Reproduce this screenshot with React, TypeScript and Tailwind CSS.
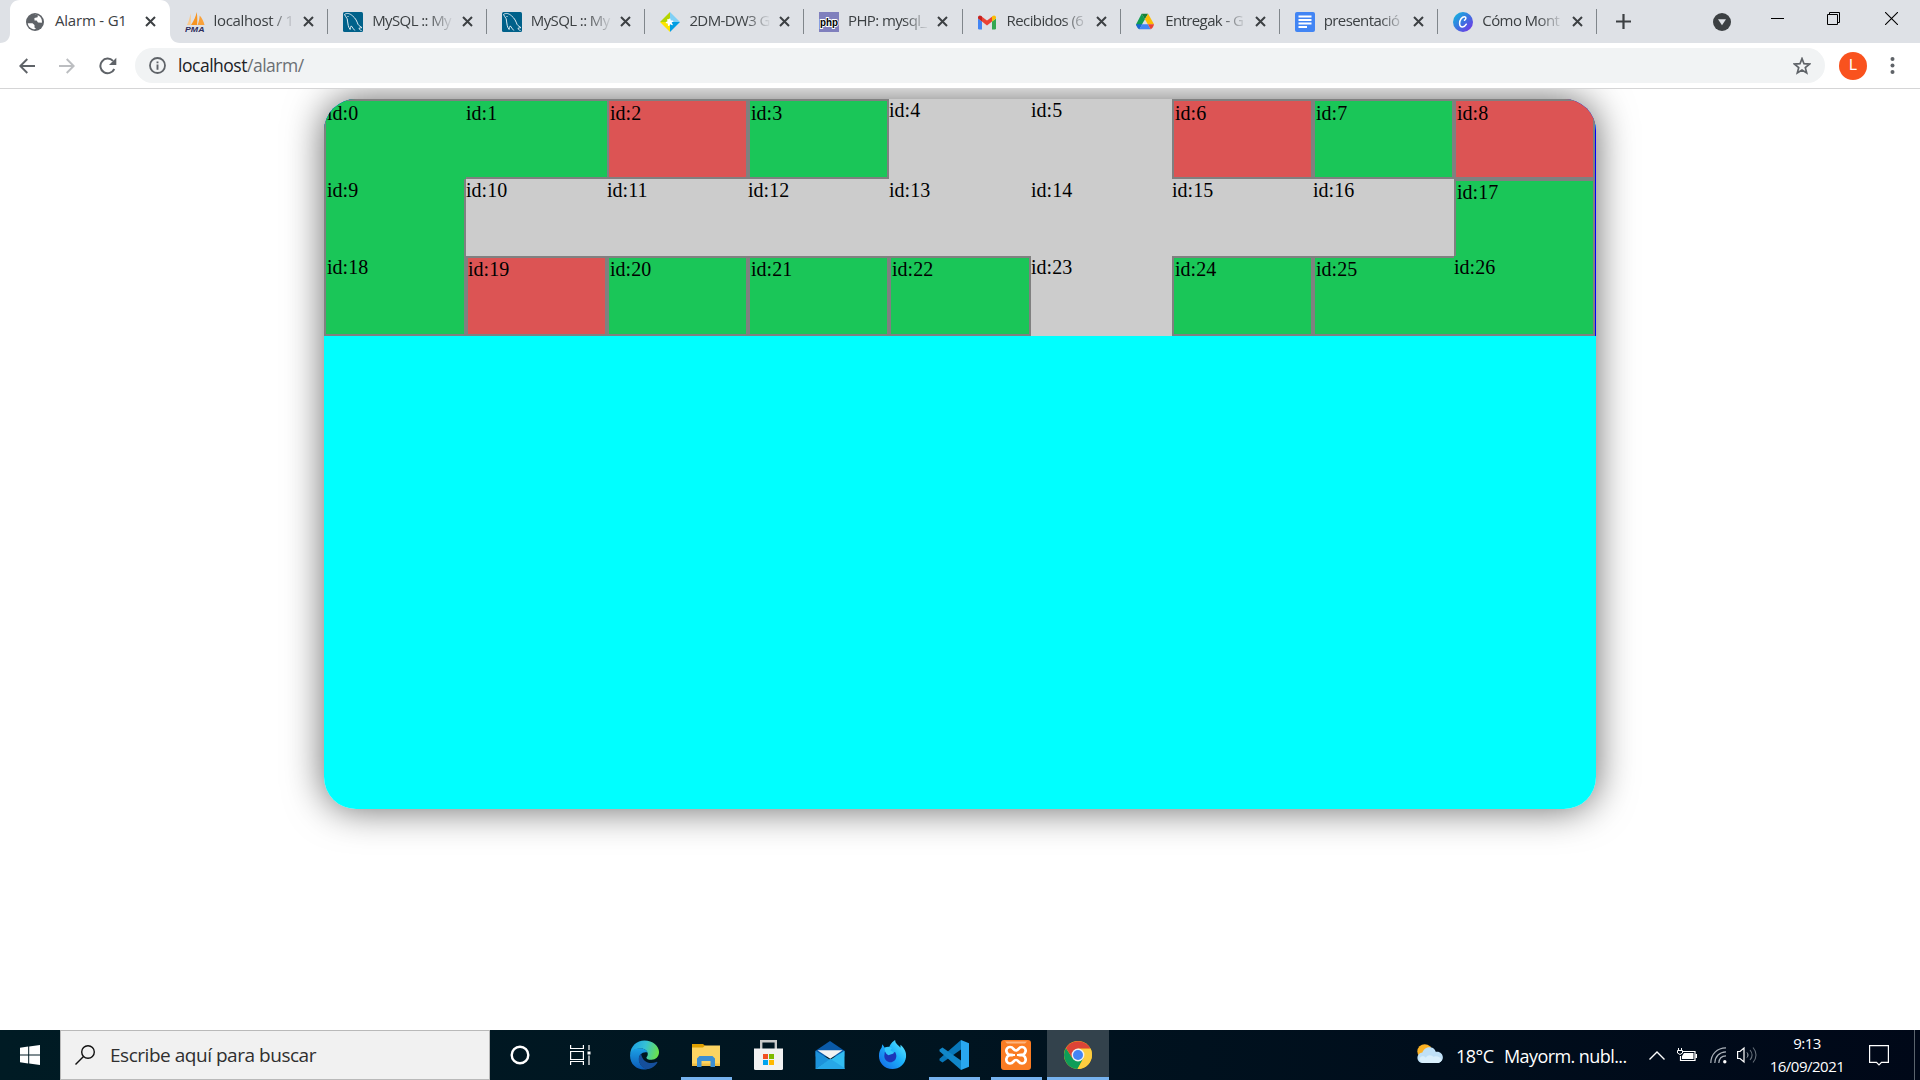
import React from "react";

type Kind = "green" | "red" | "floor";
type Cell = { kind: Kind; edges: string };

const ALL = "border-2 pl-px";
const OPEN = "border-0";

const cells: Cell[] = [
  { kind: "green", edges: "border-t-2 border-l-2 pt-px pl-px" },
  { kind: "green", edges: "border-t-2 border-b-2 pt-px" },
  { kind: "red", edges: "border-2 pt-px pl-px" },
  { kind: "green", edges: "border-2 pt-px pl-px" },
  { kind: "floor", edges: OPEN },
  { kind: "floor", edges: OPEN },
  { kind: "red", edges: "border-2 pt-px pl-px" },
  { kind: "green", edges: "border-2 pt-px pl-px" },
  { kind: "red", edges: "border-2 pt-px pl-px" },
  { kind: "green", edges: "border-l-2 border-r-2 pl-px" },
  { kind: "floor", edges: OPEN },
  { kind: "floor", edges: OPEN },
  { kind: "floor", edges: OPEN },
  { kind: "floor", edges: OPEN },
  { kind: "floor", edges: OPEN },
  { kind: "floor", edges: OPEN },
  { kind: "floor", edges: OPEN },
  { kind: "green", edges: "border-t-2 border-l-2 border-r-2 pl-px" },
  { kind: "green", edges: "border-l-2 border-r-2 border-b-2 pl-px" },
  { kind: "red", edges: "border-2" },
  { kind: "green", edges: ALL },
  { kind: "green", edges: ALL },
  { kind: "green", edges: ALL },
  { kind: "floor", edges: OPEN },
  { kind: "green", edges: ALL },
  { kind: "green", edges: "border-t-2 border-l-2 border-b-2 pl-px" },
  { kind: "green", edges: "border-r-2 border-b-2" },
];

const fills: Record<Kind, string> = {
  green: "bg-[#1ac658]",
  red: "bg-[#dc5454]",
  floor: "bg-[#cccccc]",
};

function GlobeIcon() {
  return (
    <svg className="size-5" viewBox="0 0 20 20">
      <circle cx="9" cy="10" r="9" fill="#5f6368" />
      <path d="M1.8 11.2h4.700l2 1.900v2.300l1.600 1.700c-4.200.7-7.900-2-8.300-5.900z" fill="#fff" />
      <path d="M8.300 3 11.900 3.100 11.600 5.300 8.400 6.100 8.500 8.400 10.600 8.500 12 10.600 15.900 10.700C16.600 6.500 13.700 3 9.500 2.700z" fill="#fff" />
    </svg>
  );
}

function PmaIcon() {
  return (
    <svg className="size-5" viewBox="0 0 20 20">
      <path d="M2 13C4 9 5 5 5.400 1.500 6 5 6 9 5.500 13z" fill="#fbc98a" />
      <path d="M6 13C9 9 11 4 11.600 0 12.600 5 12.400 9 12 13z" fill="#f79420" />
      <path d="M12.500 13C14 10 14.500 6 14.700 3.500 17 6 18.800 10 19.500 13z" fill="#f9a13a" />
      <text x="0" y="19.600" fontSize="7.500" fontWeight="bold" fontStyle="italic" fontFamily="Liberation Sans, sans-serif" fill="#2c2c5c" textLength="19.500" lengthAdjust="spacingAndGlyphs">PMA</text>
    </svg>
  );
}

function MySqlIcon() {
  return (
    <svg className="size-5" viewBox="0 0 20 20">
      <rect width="20" height="20" rx="1.500" fill="#00618a" />
      <path d="M1.500 2.500C4 .6 7 1.500 9.500 3.800c3.500 2.900 4.300 5.500 5.500 8.500 1 1.700 2.700 2.200 4 3.400-1.400 0-2.500.2-3.200.8 1 .8 2 1.500 2.700 2.500M1.500 2.500c.6 1.600 1.900 2.700 2.700 4.300.6 2 .3 4.300 1 6.500.3 1.700 1 3 1.900 4.200.2-1.500.4-2.800 1.200-3.600 1.200 1.500 2.100 3.200 3.500 4.600" fill="none" stroke="#dcebf2" strokeWidth="1" />
      <circle cx="5" cy="4.500" r=".6" fill="#fff" />
    </svg>
  );
}

function PuzzleIcon() {
  return (
    <svg className="size-5" viewBox="0 0 20 20">
      <path d="M0 10 10 0v10z" fill="#b5d400" />
      <path d="M10 0v10h10z" fill="#7fd0f5" />
      <path d="M0 10h10v10z" fill="#fce500" />
      <path d="M10 10h10L10 20z" fill="#009ee3" />
      <path d="M7.200 7.200c1.600.7 1.600-1.400 3-.6.9.7-.2 1.500.7 1.900.6.200 2.200-.6 2.500.6.300 1.300-1.700.9-1.700 1.700 0 .9 1.600 1.300.9 2.200-.9.8-1.600-.9-2.500-.6-.8.3-.3 1.800-1.600 1.600-1.300-.3-.2-1.900-.8-2.400-.5-.4-1.900.1-2-1.100.1-1 1.600-.5 1.800-1.200.1-.7-.8-1.400-.3-2.100z" fill="#fff" />
    </svg>
  );
}

function PhpIcon() {
  return (
    <svg className="size-5" viewBox="0 0 20 20">
      <rect width="20" height="20" fill="#7f7fbd" />
      <text x="1" y="14" fontSize="11" fontWeight="bold" fontFamily="Liberation Sans, sans-serif" fill="#000" stroke="#fff" strokeWidth="1.800" paintOrder="stroke" textLength="18" lengthAdjust="spacingAndGlyphs">php</text>
    </svg>
  );
}

function GmailIcon() {
  return (
    <svg className="size-5" viewBox="0 0 20 20">
      <path d="M0 6.500 4 9.500V17.500H1.300A1.300 1.300 0 0 1 0 16.200z" fill="#4285f4" />
      <path d="M14 9.500 18 6.500V16.200a1.300 1.300 0 0 1-1.300 1.300H14z" fill="#34a853" />
      <path d="M4 4.800 9 8.600 14 4.800V9.600L9 13.400 4 9.600z" fill="#ea4335" />
      <path d="M0 5.500C0 3.600 2 2.800 3.400 4L4 4.500V9.600L0 6.600z" fill="#c5221f" />
      <path d="M18 5.500C18 3.600 16 2.800 14.600 4L14 4.500V9.600L18 6.600z" fill="#fbbc04" />
    </svg>
  );
}

function DriveIcon() {
  return (
    <svg className="size-5" viewBox="0 0 20 20">
      <path d="M5.600 1.700 8.900 7.300 3.200 17.200 0 12.500z" fill="#0f9d50" />
      <path d="M5.600 1.700H12.100L8.900 7.300z" fill="#188038" />
      <path d="M12.100 1.700 18 12.200H11.800L8.900 7.300z" fill="#fbbc04" />
      <path d="M0 12.200H6.100L3.300 17.200C2 16.900 0 13.500 0 12.200z" fill="#1967d2" />
      <path d="M6.100 12.200H11.900L14.700 17.200H3.300z" fill="#4285f4" />
      <path d="M11.900 12.200H18C18 13.500 16 16.900 14.700 17.200z" fill="#ea4335" />
    </svg>
  );
}

function DocsIcon() {
  return (
    <svg className="size-5" viewBox="0 0 20 20">
      <rect width="20" height="20" rx="2" fill="#4285f4" />
      <path d="M3.500 4.500H16.500M3.500 8H16.500M3.500 11.500H16.500M3.500 15H12" stroke="#fff" strokeWidth="1.800" />
    </svg>
  );
}

function CanvaIcon() {
  return (
    <svg className="size-5" viewBox="0 0 20 20">
      <defs>
        <linearGradient id="canva" x1="0" y1="0" x2="1" y2="1">
          <stop offset="0" stopColor="#0cc0df" />
          <stop offset=".5" stopColor="#3b74e0" />
          <stop offset="1" stopColor="#7d2ae8" />
        </linearGradient>
      </defs>
      <circle cx="10" cy="10" r="10" fill="url(#canva)" />
      <path d="M11.500 8.200c1.700-.6 2-3.300.1-3.500-2.700-.1-5 3.400-5 6.600 0 2.200 1.100 3.700 2.900 3.700 1.600 0 2.900-1.200 3.800-2.800" fill="none" stroke="#fff" strokeWidth="1.500" strokeLinecap="round" />
    </svg>
  );
}

const FADE = "tracking-[-0.35px] [mask-image:linear-gradient(to_right,#000_68%,transparent_100%)]";
const FADE_TIGHT = "tracking-[-0.6px] [mask-image:linear-gradient(to_right,#000_68%,transparent_100%)]";

const tabs = [
  { title: "Alarm - G1", icon: <GlobeIcon />, look: "tracking-[-0.2px]" },
  { title: "localhost / 1", icon: <PmaIcon />, look: FADE },
  { title: "MySQL :: My", icon: <MySqlIcon />, look: FADE_TIGHT },
  { title: "MySQL :: My", icon: <MySqlIcon />, look: FADE_TIGHT },
  { title: "2DM-DW3 G", icon: <PuzzleIcon />, look: FADE_TIGHT },
  { title: "PHP: mysql_", icon: <PhpIcon />, look: FADE_TIGHT },
  { title: "Recibidos (6", icon: <GmailIcon />, look: FADE_TIGHT },
  { title: "Entregak - G", icon: <DriveIcon />, look: FADE_TIGHT },
  { title: "presentació", icon: <DocsIcon />, look: FADE_TIGHT },
  { title: "Cómo Mont", icon: <CanvaIcon />, look: FADE_TIGHT },
];

function TabItem({ title, icon, look, active, divider }: { title: string; icon: React.ReactNode; look: string; active: boolean; divider: boolean }) {
  return (
    <div className={`relative flex h-[43px] w-[158.6px] shrink-0 items-center pl-4 ${active ? "z-10" : ""}`}>
      {active && (
        <svg className="absolute top-0 -left-[10px] h-[43px] w-[180px]" viewBox="0 0 180 43">
          <path d="M0 43C6 43 10 39 10 33V10C10 4 14 0 20 0H160C166 0 170 4 170 10V33C170 39 174 43 180 43z" fill="#fff" />
        </svg>
      )}
      <div className="relative size-5 shrink-0">{icon}</div>
      <div className={`relative mb-[3px] ml-[9px] w-[82px] text-[15px] leading-5 whitespace-nowrap text-[#3c4043] ${look}`}>
        {title}
      </div>
      <svg className="relative ml-[7.5px] size-[11px] shrink-0" viewBox="0 0 11 11">
        <path d="M1 1 10 10M10 1 1 10" stroke="#3c4043" strokeWidth="2" />
      </svg>
      {divider && <div className="-mr-px ml-auto h-[25px] w-px bg-[#80868b]" />}
    </div>
  );
}

function TabStrip() {
  return (
    <div className="flex h-[43px] bg-[#dee1e6] pl-[10px]">
      {tabs.map((t, i) => (
        <TabItem key={i} title={t.title} icon={t.icon} look={t.look} active={i === 0} divider={i > 0} />
      ))}
      <div className="flex flex-1 items-center pl-5">
        <svg className="size-[15px]" viewBox="0 0 15 15">
          <path d="M7.500 0V15M0 7.500H15" stroke="#3c4043" strokeWidth="2.200" />
        </svg>
        <svg className="ml-[82px] size-[18px]" viewBox="0 0 18 18">
          <circle cx="9" cy="9" r="9" fill="#3c4043" />
          <path d="M5 6.300H13L9 12.300z" fill="#dee1e6" />
        </svg>
        <div className="ml-auto flex h-full items-start pt-3">
          <svg className="mr-[43px] h-[13px] w-[13px]" viewBox="0 0 13 13">
            <path d="M0 6.500H13" stroke="#000" />
          </svg>
          <svg className="mr-[44px] h-[13px] w-[14px]" viewBox="0 0 14 13">
            <path d="M.5 2.500H10.500V12.500H.5zM2.500 2.500V.5H12.500V10.500H10.500" fill="none" stroke="#000" />
          </svg>
          <svg className="mr-[22px] h-[13px] w-[13px]" viewBox="0 0 13 13">
            <path d="M0 0 13 13M13 0 0 13" stroke="#000" strokeWidth="1.100" />
          </svg>
        </div>
      </div>
    </div>
  );
}

function Toolbar() {
  return (
    <div className="flex h-[46px] items-center border-b border-[#d5d5d6] bg-white pl-[19px]">
      <svg className="h-4 w-4" viewBox="0 0 16 16" fill="none" stroke="#5f6368" strokeWidth="1.900">
        <path d="M16 8H1.500M8.300 1 1.300 8 8.300 15" />
      </svg>
      <svg className="ml-6 h-4 w-4" viewBox="0 0 16 16" fill="none" stroke="#bcbec1" strokeWidth="1.900">
        <path d="M0 8H14.500M7.700 1 14.700 8 7.700 15" />
      </svg>
      <svg className="ml-6 h-[18px] w-[18px]" viewBox="0 0 18 18">
        <path d="M15.300 12A7.300 7.300 0 1 1 14 3.900" fill="none" stroke="#5f6368" strokeWidth="2" />
        <path d="M17.300.7V8H10z" fill="#5f6368" />
      </svg>
      <div className="ml-[18px] flex h-[35px] w-[1690px] items-center rounded-full bg-[#f1f3f4] pr-[14px] pl-[14px]">
        <svg className="size-[17px]" viewBox="0 0 17 17">
          <circle cx="8.500" cy="8.500" r="7.500" fill="none" stroke="#5f6368" strokeWidth="1.800" />
          <path d="M8.500 7.500V12.800M8.500 4.400V6.200" stroke="#5f6368" strokeWidth="1.900" />
        </svg>
        <div className="mb-px ml-[12px] text-[17.5px] leading-6 tracking-[-0.48px] text-[#202124]">
          localhost<span className="text-[#6b6f73]">/alarm/</span>
        </div>
        <svg className="ml-auto size-[18px]" viewBox="0 0 18 18">
          <path d="M9 1.600 11 6.700 16.500 7.100 12.300 10.600 13.700 16 9 13.100 4.300 16 5.700 10.600 1.500 7.100 7 6.700z" fill="none" stroke="#5f6368" strokeWidth="1.700" />
        </svg>
      </div>
      <div className="ml-[14px] flex size-7 items-center justify-center rounded-full bg-[#f9521e] font-['Roboto',sans-serif] text-[15px] text-white">L</div>
      <svg className="ml-[23px] h-[17px] w-[5px]" viewBox="0 0 5 17" fill="#5f6368">
        <circle cx="2.500" cy="2" r="2" />
        <circle cx="2.500" cy="8.500" r="2" />
        <circle cx="2.500" cy="15" r="2" />
      </svg>
    </div>
  );
}

function AlarmMap() {
  return (
    <main className="flex h-[941px] justify-center overflow-hidden bg-white pt-[10px]">
      <div className="h-[710px] w-[1272px] rounded-[32px] shadow-[0_0_38px_rgba(0,0,0,0.6)]">
        <div className="h-full overflow-hidden rounded-[32px] bg-[#00ffff]">
          <div className="bg-[#0000ff]">
            <div className="grid w-[1271px] grid-cols-[142px_141px_141px_141px_142px_141px_141px_141px_141px] grid-rows-[80px_77px_80px] font-['Liberation_Serif',serif] text-[20px] leading-[23px] text-black">
              {cells.map((c, i) => (
                <div key={i} className={`border-[#808080] ${c.edges} ${fills[c.kind]}`}>
                  id:{i}
                </div>
              ))}
            </div>
          </div>
        </div>
      </div>
    </main>
  );
}

function EdgeIcon() {
  return (
    <svg className="h-[30px] w-[31px]" viewBox="0 0 31 31">
      <defs>
        <linearGradient id="edgeTop" x1="0" y1=".3" x2="1" y2=".5">
          <stop offset="0" stopColor="#1b9de2" />
          <stop offset=".5" stopColor="#35c1d6" />
          <stop offset="1" stopColor="#6be04a" />
        </linearGradient>
        <linearGradient id="edgeMid" x1="0" y1="0" x2="0" y2="1">
          <stop offset="0" stopColor="#1ba0e6" />
          <stop offset="1" stopColor="#0c59b5" />
        </linearGradient>
      </defs>
      <path d="M.6 15.500C1 6 7.500.5 15.500.5 24 .5 30.500 6 30.500 12.500c0 5-3.500 8-7.700 8-3.600 0-5.300-1.200-5.300-2.200 0-.8 1.400-1.400 1.400-3.800 0-3-3-5.800-7.200-5.800C6 8.700 1.500 11.500.6 15.500z" fill="url(#edgeTop)" />
      <path d="M.6 15.500C1 11 5.500 8.500 10.500 8.500c4.500 0 7.500 2 8.300 4.500-5-1.500-9 2-9 6.500 0 6 4.500 10 9 10.500-8.700 2.500-18.700-3.500-18.200-14.500z" fill="url(#edgeMid)" />
      <path d="M12 14.300c-2.500 2-3.300 6-1.500 9.700 1.800 4 5.500 6.500 9.500 5.900 4-1 7-3.500 8.700-6.500.3-.7-.2-1-.8-.7-7 3-14.500.3-15.900-8.400z" fill="#154f9c" />
    </svg>
  );
}

function ExplorerIcon() {
  return (
    <svg className="h-[23px] w-[28px]" viewBox="0 0 28 23">
      <path d="M0 0H11L13.500 2V5H0z" fill="#dfa000" />
      <path d="M0 3.500H11L13 1.500H28V22H0z" fill="#fcd462" />
      <path d="M0 19.500H28V22H0z" fill="#f0be42" />
      <path d="M5 23V14.500L7.500 12H20.500L23 14.500V23H18.500V17H9.500V23z" fill="#3c8fd3" />
    </svg>
  );
}

function StoreIcon() {
  return (
    <svg className="h-[30px] w-[29px]" viewBox="0 0 29 30">
      <path d="M7.200 10V1.200H21.800V10" fill="none" stroke="#c9c9c9" strokeWidth="2.400" />
      <path d="M0 8.500H29V28.500A1.500 1.500 0 0 1 27.500 30H1.500A1.500 1.500 0 0 1 0 28.500z" fill="#f2f2f2" />
      <path d="M9 14H14V19H9z" fill="#f25022" />
      <path d="M15 14H20V19H15z" fill="#7fba00" />
      <path d="M9 20H14V25H9z" fill="#00a4ef" />
      <path d="M15 20H20V25H15z" fill="#ffb900" />
    </svg>
  );
}

function MailIcon() {
  return (
    <svg className="h-[28px] w-[30px]" viewBox="0 0 30 29">
      <path d="M0 10 15 0 30 10V16H0z" fill="#0a5aa8" />
      <path d="M0 10 15 19.500 0 29z" fill="#1c92da" />
      <path d="M30 10V29H0z" fill="#32bdf2" />
      <path d="M2 9.500H28L15.300 18.500z" fill="#f3f3f3" />
      <path d="M0 29 15.300 18.500 30 28V29z" fill="#27a8e8" />
    </svg>
  );
}

function FirefoxIcon() {
  return (
    <svg className="mb-[2px] h-[29px] w-[29px]" viewBox="0 0 29 30">
      <defs>
        <linearGradient id="fox" x1="1" y1="0" x2="0" y2="1">
          <stop offset="0" stopColor="#6af0ff" />
          <stop offset=".45" stopColor="#1cb2fb" />
          <stop offset="1" stopColor="#1362e4" />
        </linearGradient>
      </defs>
      <path d="M4 4.500 6.500 8C8.500 7 10 7 11 7.200 13 3 15.500 1 17.200 0c.2 4.500 4 5 5.300 8 .4-1 .3-2 .2-3C27 8.500 29 13 28.500 17.500 27.700 25 21.500 30 14.500 30 6 30 .5 23.500.5 16.500c0-4 1-6.500 2.700-8.500z" fill="url(#fox)" />
      <path d="M6.500 12.500c2.500-1.700 5.500-1 7-.5 1.500.5 2.500 1 3.700.5 2.800 4.500.8 9.500-3.700 10.500-4 .5-7.500-2.500-7.500-6.500z" fill="#1b36b8" />
      <path d="M6.500 8c2.500-1.500 6-.8 7.500.5l-1.700 2.200c2 1 4 1.700 3.700 2.700-1 1.600-4.500 1.200-5.500 2.300-2.500-.7-4.500-4-4-7.700z" fill="#35c7fc" />
    </svg>
  );
}

function CodeIcon() {
  return (
    <svg className="h-[30px] w-[30px]" viewBox="0 0 30 30">
      <path d="M22 0V9.500L3.500 22.500.5 20.500V18.800z" fill="#0877b9" />
      <path d="M22 30V20.500L3.500 7.500.5 9.500V11.200z" fill="#1187c9" />
      <path d="M22 0 30 3.300V26.700L22 30z" fill="#29a7f0" />
    </svg>
  );
}

function XamppIcon() {
  return (
    <svg className="h-[30px] w-[30px]" viewBox="0 0 30 30">
      <rect width="30" height="30" rx="3" fill="#fa7c23" />
      <path d="M4 1.500H26L24 3.500H6z" fill="#fdb57f" />
      <path d="M12 15C4 16.500 3.500 7 9 7c3.800 0 3 3.500 6 3.500S17.200 7 21 7c5.500 0 5 9.500-3 8 8-1.500 8.500 8.500 3 8.500-3.800 0-3-3.500-6-3.500s-2.200 3.500-6 3.500c-5.500 0-5-10 3-8.500" fill="none" stroke="#fff" strokeWidth="2.700" strokeLinejoin="round" />
      <path d="M11 15H14M16 15H19" stroke="#fff" strokeWidth="2" />
    </svg>
  );
}

function ChromeIcon() {
  return (
    <svg className="h-[28px] w-[28px]" viewBox="0 0 28 28">
      <circle cx="14" cy="14" r="14" fill="#fbc116" />
      <path d="M8.500 17.200 1.900 7A14 14 0 0 0 13.500 28L19.500 17.200z" fill="#0f9d58" />
      <path d="M14 7.600H26.500C31 16 25 28 13.500 28L19.500 17.200z" fill="#fdcd40" />
      <path d="M2 7A14 14 0 0 1 26.400 7.600H14L8.500 17.200z" fill="#dc4437" />
      <circle cx="14" cy="14" r="6.400" fill="#f1f1f1" />
      <circle cx="14" cy="14" r="5" fill="#4384f3" />
    </svg>
  );
}

const apps = [
  { name: "edge", icon: <EdgeIcon />, running: false, active: false },
  { name: "explorer", icon: <ExplorerIcon />, running: true, active: false },
  { name: "store", icon: <StoreIcon />, running: false, active: false },
  { name: "mail", icon: <MailIcon />, running: false, active: false },
  { name: "firefox", icon: <FirefoxIcon />, running: false, active: false },
  { name: "code", icon: <CodeIcon />, running: true, active: false },
  { name: "xampp", icon: <XamppIcon />, running: true, active: false },
  { name: "chrome", icon: <ChromeIcon />, running: true, active: true },
];

function Taskbar() {
  return (
    <footer className="flex h-[50px] bg-linear-to-r from-[#001b24] via-[#001420] to-[#000818] text-white">
      <div className="flex w-[60px] items-center justify-center">
        <svg className="size-5" viewBox="0 0 20 20" fill="#fff">
          <path d="M0 2.700 8.200 1.500V9.500H0zM9.200 1.400 20 0V9.500H9.200zM0 10.500H8.200V18.500L0 17.300zM9.200 10.500H20V20L9.200 18.600z" />
        </svg>
      </div>
      <div className="flex w-[430px] items-center border border-[#b9b9b9] bg-[#f1f1f1] pl-[14px]">
        <svg className="size-5" viewBox="0 0 20 20" fill="none" stroke="#111" strokeWidth="1.400">
          <circle cx="13" cy="7" r="6.300" />
          <path d="M8.500 11.500.5 19.500" />
        </svg>
        <div className="ml-[15px] text-[19px] leading-6 tracking-[-0.47px] text-[#2f2f2f]">Escribe aquí para buscar</div>
      </div>
      <div className="flex w-[60px] items-center justify-center">
        <svg className="size-5" viewBox="0 0 20 20">
          <circle cx="10" cy="10" r="8.300" fill="none" stroke="#fff" strokeWidth="2.400" />
        </svg>
      </div>
      <div className="flex w-[63px] items-center justify-center pr-[3px]">
        <svg className="h-5 w-[21px]" viewBox="0 0 21 20" fill="none" stroke="#fff" strokeWidth="1.200">
          <path d="M.6 0V3.500H13.400V0M.6 6.500H13.400V14.500H.6zM.6 20V16.500H13.400V20M19 0V5M19 10.500V20" />
          <path d="M17.500 6.500H20.500V9.500H17.500z" fill="#fff" stroke="none" />
        </svg>
      </div>
      {apps.map((a) => (
        <div key={a.name} className={`relative flex w-[62px] items-center justify-center ${a.active ? "bg-[#33424c]" : ""}`}>
          {a.icon}
          {a.running && <div className={`absolute bottom-0 h-[3px] bg-[#76b2ee] ${a.active ? "w-[62px]" : "w-[51px]"}`} />}
        </div>
      ))}
      <div className="ml-auto flex items-center">
        <svg className="mb-[2px] h-[20px] w-[26px]" viewBox="0 0 27 21">
          <circle cx="8" cy="8" r="7.800" fill="#fbb124" />
          <path d="M6 20a5.500 5.500 0 0 1-.5-11C7 4.500 11 3 14 3.500c3 .4 5 2.500 5.500 4.700C24 7.500 27 10.500 27 14c0 3.500-2.500 6-6 6z" fill="#bfe0f7" />
          <path d="M6 20c-4-1-4.500-5-2-6.500 2-1 4-.5 5 1 2-4 7-3 8-1 3-1.500 7.500 0 9 3-1 2.500-3 3.500-5 3.500z" fill="#d9effc" />
        </svg>
        <div className="mt-px ml-[13px] w-[48px] text-[18px] leading-6 tracking-[-0.5px]">18°C</div>
        <div className="mt-px w-[145px] text-[18px] leading-6 tracking-[-0.58px] whitespace-nowrap">Mayorm. nubl...</div>
        <svg className="h-[9px] w-[16px]" viewBox="0 0 16 9">
          <path d="M.5 8.500 8 1 15.500 8.500" fill="none" stroke="#fff" strokeWidth="1.400" />
        </svg>
        <svg className="ml-[12px] h-[14px] w-[20px]" viewBox="0 0 20 14">
          <path d="M5.500 3.500H18V12.500H3.500V8" fill="none" stroke="#fff" strokeWidth="1.200" />
          <path d="M7 5H16.500V11H5V8z" fill="#fff" />
          <path d="M1.500 0V2M4.500 0V2M.5 2.500H5.500V5L3 6.500.5 5z" stroke="#fff" fill="none" />
          <path d="M18.500 6H20V10H18.500z" fill="#fff" />
        </svg>
        <svg className="ml-[13px] h-[17px] w-[17px]" viewBox="0 0 17 17" fill="none">
          <path d="M.8 16C1 7 7 1 16 .8M4.800 16C5 9.500 9.500 5 16 4.800M8.800 16C9 11.500 11.500 9 16 8.800" stroke="#aab2ba" strokeWidth="1.200" />
          <circle cx="14.800" cy="14.800" r="1.700" fill="#fff" />
        </svg>
        <svg className="ml-[10px] h-[18px] w-[20px]" viewBox="0 0 20 18" fill="none">
          <path d="M.6 5.500H3L7 2V16L3 12.500H.6z" stroke="#fff" strokeWidth="1.200" />
          <path d="M10 6.500C11.300 8 11.300 10 10 11.500" stroke="#aab2ba" />
          <path d="M13 4C15.500 7 15.500 11 13 14M16 1.500C20 6 20 12 16 16.500" stroke="#66707a" strokeWidth="1.100" />
        </svg>
        <div className="ml-[10px] w-[80px] text-center text-[15px] leading-[23px] tracking-[-0.5px]">
          <div>9:13</div>
          <div>16/09/2021</div>
        </div>
        <svg className="ml-[22px] h-[21px] w-[20px]" viewBox="0 0 20 21" fill="none" stroke="#fff" strokeWidth="1.200">
          <path d="M.6.6H19.400V17.400H12.500L10 20 7.500 17.400H.6z" />
        </svg>
        <div className="mr-[5px] ml-[25px] h-[50px] w-px bg-[#5b646d]" />
      </div>
    </footer>
  );
}

export default function App() {
  return (
    <div className="flex h-[1080px] w-[1920px] flex-col overflow-hidden bg-white font-['Open_Sans','Noto_Sans',sans-serif]">
      <TabStrip />
      <Toolbar />
      <AlarmMap />
      <Taskbar />
    </div>
  );
}
